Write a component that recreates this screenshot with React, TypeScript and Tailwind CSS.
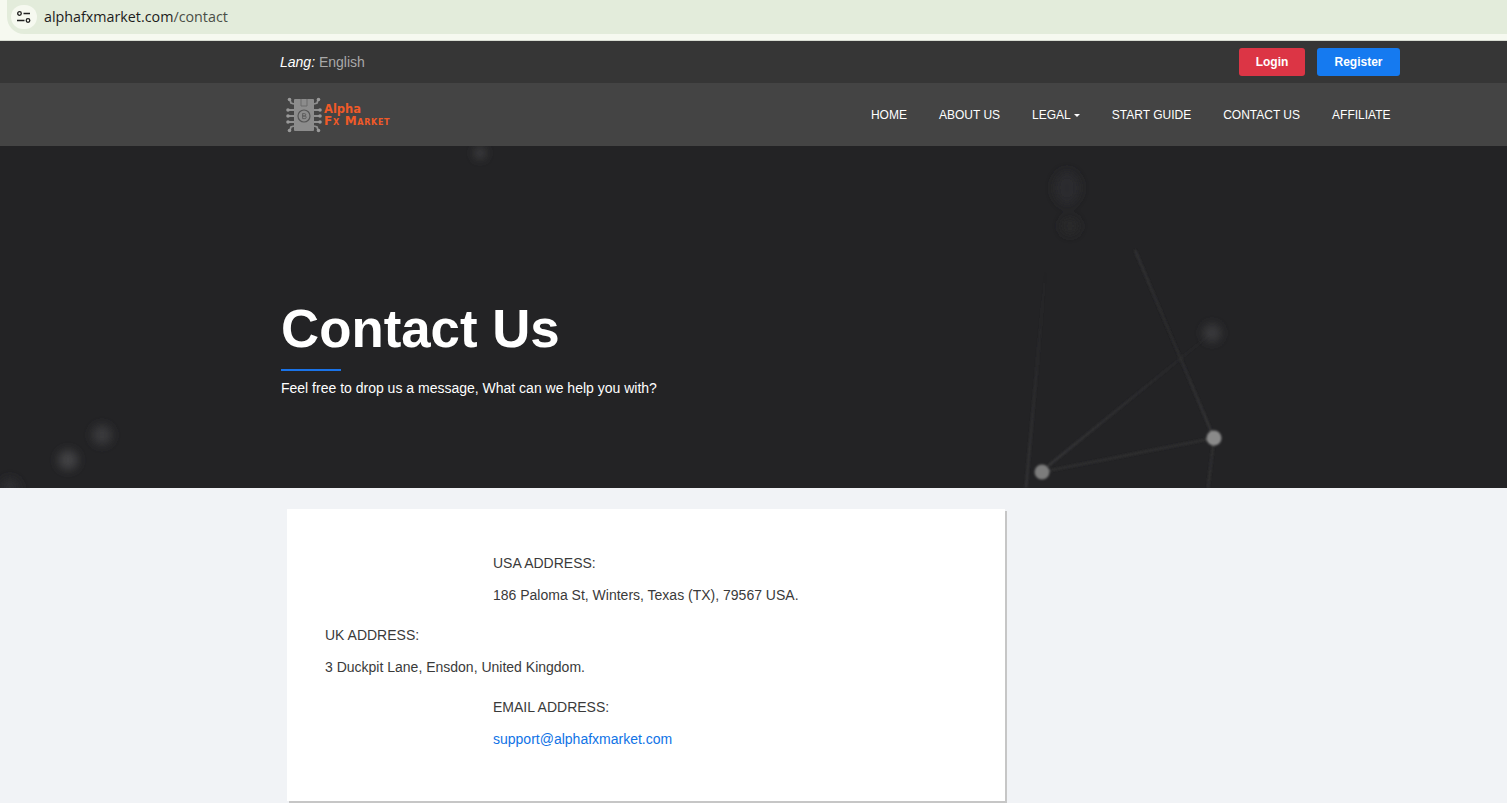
import React from 'react';

const navLinks = ['HOME', 'ABOUT US', 'LEGAL', 'START GUIDE', 'CONTACT US', 'AFFILIATE'];

const ChipLogo: React.FC = () => (
  <svg width="36" height="36" viewBox="0 0 36 36" fill="none">
    <rect x="8" y="2" width="20" height="32" rx="1" fill="#8c8c8c" />
    <path d="M15 2v7h6V2" stroke="#6a6a6a" strokeWidth="1" />
    <circle cx="18" cy="19" r="6" stroke="#555" strokeWidth="1.200" />
    <path d="M16.600 16.400v5.200M16.600 16.600h2a1.200 1.200 0 0 1 0 2.400h-2M16.600 19h2.300a1.300 1.300 0 0 1 0 2.600h-2.300" stroke="#555" strokeWidth="0.800" />
    <g stroke="#8f8f8f" strokeWidth="1.800">
      <path d="M8 7 5 6 4 3M8 13H3M8 19H2M8 25H3M8 29l-3 1-1 3" />
      <path d="M28 7l3-1 1-3M28 13h5M28 19h6M28 25h5M28 29l3 1 1 3" />
    </g>
    <g fill="#9a9a9a">
      <circle cx="3.500" cy="2.500" r="1.800" />
      <circle cx="2" cy="13" r="1.800" />
      <circle cx="2" cy="19" r="1.800" />
      <circle cx="2" cy="25" r="1.800" />
      <circle cx="3.500" cy="33.500" r="1.800" />
      <circle cx="32.500" cy="2.500" r="1.800" />
      <circle cx="34" cy="13" r="1.800" />
      <circle cx="34" cy="19" r="1.800" />
      <circle cx="34" cy="25" r="1.800" />
      <circle cx="32.500" cy="33.500" r="1.800" />
    </g>
  </svg>
);

const HeroBackdrop: React.FC = () => (
  <svg className="absolute inset-0 h-full w-full" viewBox="0 0 1507 342" preserveAspectRatio="none" fill="none">
    <defs>
      <filter id="soft" x="-100%" y="-100%" width="300%" height="300%"><feGaussianBlur stdDeviation="1.300" /></filter>
      <filter id="wide" x="-100%" y="-100%" width="300%" height="300%"><feGaussianBlur stdDeviation="5" /></filter>
      <linearGradient id="rise" gradientUnits="userSpaceOnUse" x1="1026" y1="342" x2="1046" y2="120">
        <stop offset="0" stopColor="#363638" />
        <stop offset="1" stopColor="#363638" stopOpacity="0" />
      </linearGradient>
      <linearGradient id="fork" gradientUnits="userSpaceOnUse" x1="1048" y1="320" x2="1212" y2="187">
        <stop offset="0" stopColor="#3a3a3c" />
        <stop offset="1" stopColor="#3a3a3c" stopOpacity="0.100" />
      </linearGradient>
      <linearGradient id="spine" gradientUnits="userSpaceOnUse" x1="1214" y1="292" x2="1135" y2="104">
        <stop offset="0" stopColor="#373739" />
        <stop offset="0.550" stopColor="#2a2a2c" />
        <stop offset="1" stopColor="#343436" />
      </linearGradient>
    </defs>
    <g filter="url(#soft)">
      <path d="M1026 342 1046 120" stroke="url(#rise)" strokeWidth="2" />
      <path d="M1042 326 1214 292" stroke="#313133" strokeWidth="2" />
      <path d="M1048 320 1212 187" stroke="url(#fork)" strokeWidth="2" />
      <path d="M1214 292 1135 104" stroke="url(#spine)" strokeWidth="2" />
      <path d="M1214 292 1208 342" stroke="#313133" strokeWidth="2" />
      <circle cx="1042" cy="326" r="7.500" fill="#7c7c7c" />
      <circle cx="1214" cy="292" r="7.500" fill="#8a8a8a" />
    </g>
    <g filter="url(#wide)">
      <circle cx="1212" cy="187" r="9" fill="#3a3a3c" />
      <ellipse cx="1067" cy="42" rx="13" ry="17" fill="#2b2b2d" />
      <circle cx="1070" cy="80" r="9" fill="#29292b" />
      <circle cx="480" cy="7" r="6" fill="#404042" />
      <circle cx="68" cy="314" r="10" fill="#424244" />
      <circle cx="102" cy="289" r="10" fill="#3a3a3c" />
      <circle cx="10" cy="342" r="10" fill="#2e2e30" />
    </g>
  </svg>
);

const App: React.FC = () => {
  return (
    <div className="min-h-[803px] bg-[#f1f3f6] font-['Liberation_Sans',Arial,sans-serif] text-[14px] text-[#3a3a3a]">
      {/* browser address bar */}
      <div className="h-[41px] border-b border-[#d8dcd2] bg-[#f6f9f0] pl-[7px]">
        <div className="flex h-[34px] items-center rounded-bl-[17px] bg-[#e3ecdb] pl-[4px]">
          <div className="flex h-[24px] w-[26px] items-center justify-center rounded-full bg-[#f6f9f0]">
            <svg width="16" height="14" viewBox="0 0 16 14" fill="none" stroke="#1f1f1f" strokeWidth="1.300">
              <circle cx="3.500" cy="3.500" r="1.800" />
              <path d="M7.500 3.500H14M1 10.500h7.500" />
              <circle cx="12" cy="10.500" r="1.800" />
            </svg>
          </div>
          <span className="ml-[7px] leading-[20px] font-['Open_Sans',sans-serif] text-[14.300px] text-[#1c1c1c]">
            alphafxmarket.com<span className="text-[#4a4f47]">/contact</span>
          </span>
        </div>
      </div>

      {/* language / auth bar */}
      <div className="flex h-[42px] items-center justify-between bg-[#363636] pl-[280px] pr-[107px]">
        <div className="text-[14px] text-[#a9a9a9]">
          <em className="text-white">Lang:</em> English
        </div>
        <div className="flex gap-3">
          <button className="flex h-[28px] w-[66px] items-center justify-center rounded-[3px] bg-[#dc3545] text-[12px] font-bold text-white">Login</button>
          <button className="flex h-[28px] w-[83px] items-center justify-center rounded-[3px] bg-[#157af0] text-[12px] font-bold text-white">Register</button>
        </div>
      </div>

      {/* main nav */}
      <nav className="flex h-[63px] items-center justify-between bg-[#444444] pl-[286px] pr-[116.500px]">
        <div className="flex items-center gap-[2px]">
          <ChipLogo />
          <div className="font-['DejaVu_Sans',sans-serif] font-bold leading-[12px] text-[#f05a28]">
            <div className="text-[11.500px]">Alpha</div>
            <div className="text-[12px] tracking-[0.700px] [font-variant:small-caps]">Fx Market</div>
          </div>
        </div>
        <ul className="flex items-center gap-8 text-[12px] text-white">
          {navLinks.map((link) => (
            <li key={link} className="flex items-center gap-[3px]">
              {link}
              {link === 'LEGAL' && <span className="mt-[1px] h-0 w-0 border-x-[3px] border-t-[3px] border-x-transparent border-t-white" />}
            </li>
          ))}
        </ul>
      </nav>

      {/* hero */}
      <section className="relative h-[342px] overflow-hidden bg-[#232325]">
        <HeroBackdrop />
        <div className="relative pl-[281px] pt-[152px] text-white">
          <h1 className="text-[52.800px] font-bold leading-[62px]">Contact Us</h1>
          <div className="mt-[9px] h-[2px] w-[60px] bg-[#1a73e8]" />
          <p className="mt-[9px] text-[14px] leading-[16px]">Feel free to drop us a message, What can we help you with?</p>
        </div>
      </section>

      {/* contact card */}
      <main className="pl-[287px] pt-[21px]">
        <div className="flex h-[292px] w-[718px] flex-col gap-2 bg-white pl-[38px] pt-[46px] leading-[16px] shadow-[2px_2px_0_#c6c6c6]">
          <div className="pl-[168px]">
            <p className="mb-4">USA ADDRESS:</p>
            <p className="mb-4">186 Paloma St, Winters, Texas (TX), 79567 USA.</p>
          </div>
          <div>
            <p className="mb-4">UK ADDRESS:</p>
            <p className="mb-4">3 Duckpit Lane, Ensdon, United Kingdom.</p>
          </div>
          <div className="pl-[168px]">
            <p className="mb-4">EMAIL ADDRESS:</p>
            <a className="text-[#0f73e6]" href="#">support@alphafxmarket.com</a>
          </div>
        </div>
      </main>
    </div>
  );
};

export default App;
